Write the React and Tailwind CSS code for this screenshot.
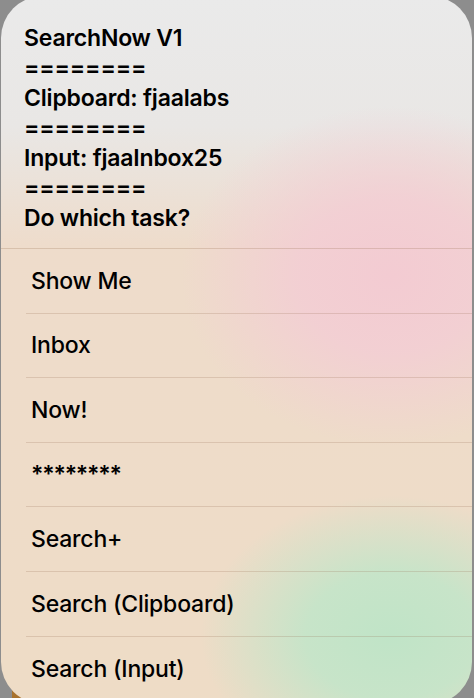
import React from "react";

const items = [
  "Show Me",
  "Inbox",
  "Now!",
  "********",
  "Search+",
  "Search (Clipboard)",
  "Search (Input)",
];

const headerLines = [
  "SearchNow V1",
  "========",
  "Clipboard: fjaalabs",
  "========",
  "Input: fjaaInbox25",
  "========",
  "Do which task?",
];

export default function App() {
  return (
    <div
      className="relative w-[474px] h-[698px] overflow-hidden bg-[#8d8d8d]"
      style={{ fontFamily: "Inter, 'Noto Sans', 'Liberation Sans', sans-serif" }}
    >
      {/* content lying under the sheet */}
      <div className="absolute left-[12px] top-[680px] w-[40px] h-[30px] bg-[#a8722e]" />
      <div className="absolute left-[410px] top-[680px] w-[30px] h-[30px] bg-[#2a7a2a]" />

      <div
        className="relative ml-[1px] -mt-[4px] w-[471px] h-[708px] rounded-[42px] overflow-hidden"
        style={{
          background:
            "radial-gradient(ellipse 190px 140px at 390px 640px, rgba(192,228,199,1) 0%, rgba(195,229,201,0.9) 45%, rgba(195,229,201,0) 100%), radial-gradient(ellipse 210px 170px at 390px 280px, rgba(243,203,210,1) 0%, rgba(243,205,212,0.85) 45%, rgba(243,205,212,0) 100%), linear-gradient(180deg, #eaeaea 0px, #e9e7e5 130px, #eedccb 250px, #eedcc6 700px)",
        }}
      >
        <div className="pl-[23px] pt-[27px] pb-[15px] border-b border-[rgba(150,110,80,0.25)]">
          {headerLines.map((l, i) => (
            <div
              key={i}
              className="text-[23px] leading-[30px] font-semibold text-black tracking-[-0.2px]"
            >
              {l}
            </div>
          ))}
        </div>
        <div className="pl-[25px]">
          {items.map((t, i) => (
            <div
              key={i}
              className={`h-[64.6px] flex items-center pl-[5px] text-[23px] font-medium text-black ${
                t === "********" ? "tracking-[-1.2px] font-semibold" : "tracking-[-0.2px]"
              } ${i < items.length - 1 ? "border-b border-[rgba(150,110,80,0.22)]" : ""}`}
            >
              {t}
            </div>
          ))}
        </div>
      </div>
    </div>
  );
}
